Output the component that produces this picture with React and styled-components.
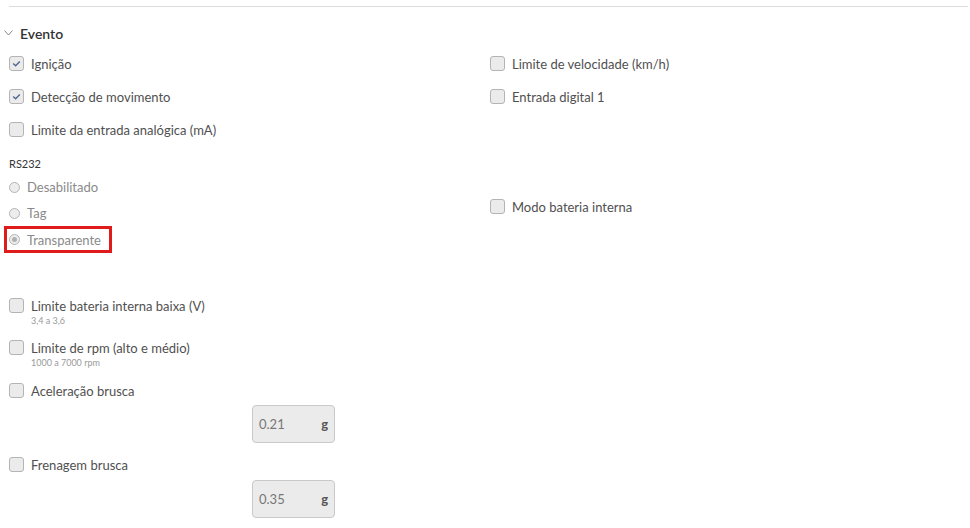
import React from "react";
import styled, { createGlobalStyle } from "styled-components";

const GlobalStyle = createGlobalStyle`
  body {
    margin: 0;
    background: #fff;
    font-family: Lato, "Liberation Sans", sans-serif;
    color: #4a4a4a;
  }
`;

const Page = styled.div`
  width: 970px;
  height: 528px;
  overflow: hidden;
  padding: 6px 2px 0 4px;
  box-sizing: border-box;
`;

const Section = styled.section`
  border-top: 1px solid #dcdcdc;
  margin-left: 5px;
`;

const Header = styled.div`
  display: flex;
  align-items: center;
  gap: 7px;
  height: 28px;
  margin: 12px 0 0 -5px;
  font-size: 14px;
  font-weight: 600;
  color: #333;
`;

const Chevron = () => (
  <svg width="9" height="6" viewBox="0 0 9 6">
    <polyline points="0.5,0.5 4.5,5 8.5,0.5" fill="none" stroke="#8a8a8a" strokeWidth="1" />
  </svg>
);

const Grid = styled.div`
  display: grid;
  grid-template-columns: 481px 1fr;
  align-items: center;
`;

const Cell = styled.div`
  height: ${(p) => p.$h || 33}px;
  display: flex;
  align-items: center;
`;

const Item = styled.label`
  display: flex;
  align-items: flex-start;
  gap: 7px;
  font-size: 13px;
  line-height: 18px;
  color: #505050;
  margin-top: ${(p) => p.$mt || 0}px;
`;

const Box = styled.span`
  flex: none;
  width: 15px;
  height: 15px;
  margin-top: 1px;
  box-sizing: border-box;
  border: 1px solid #b4b4b4;
  border-radius: 3px;
  background: #ebebeb;
  display: flex;
  align-items: center;
  justify-content: center;
`;

const Texts = styled.span`
  display: flex;
  flex-direction: column;
`;

const Hint = styled.span`
  font-size: 9px;
  line-height: 12px;
  color: #9a9a9a;
`;

const Check = ({ checked, label, hint, mt }) => (
  <Item $mt={mt}>
    <Box>
      {checked && (
        <svg width="9" height="7" viewBox="0 0 9 7">
          <polyline points="1.2,3.6 3.6,5.8 7.8,1.4" fill="none" stroke="#4f6890" strokeWidth="1.4" />
        </svg>
      )}
    </Box>
    <Texts>
      {label}
      {hint && <Hint>{hint}</Hint>}
    </Texts>
  </Item>
);

const Group = styled.div`
  display: flex;
  flex-direction: column;
  padding: 11px 0 16px;
`;

const GroupTitle = styled.div`
  font-size: 11px;
  line-height: 14px;
  color: #333;
  margin-bottom: 3px;
`;

const RadioRow = styled.div`
  display: inline-flex;
  align-self: flex-start;
  align-items: center;
  gap: 7px;
  height: 26px;
  font-size: 13px;
  color: #8a8a8a;
`;

const Highlighted = styled(RadioRow)`
  height: 21px;
  margin: 3px 0 2px -2px;
  padding: 0 8px 0 2px;
  outline: 3px solid #e01b1b;
`;

const Circle = styled.span`
  flex: none;
  width: 11px;
  height: 11px;
  box-sizing: border-box;
  border: 1px solid #b4b4b4;
  border-radius: 50%;
  background: #ededed;
  display: flex;
  align-items: center;
  justify-content: center;

  &::after {
    content: "";
    width: 5px;
    height: 5px;
    border-radius: 50%;
    background: ${(p) => (p.$on ? "#b0b0b0" : "transparent")};
  }
`;

const Column = styled.div`
  display: flex;
  flex-direction: column;
`;

const Field = styled.div`
  width: 83px;
  height: 38px;
  box-sizing: border-box;
  margin: ${(p) => p.$mt}px 0 0 243px;
  border: 1px solid #c9c9c9;
  border-radius: 4px;
  background: #ebebeb;
  display: flex;
  align-items: center;
  justify-content: space-between;
  padding: 0 6px 0 6px;
  font-size: 13px;
  color: #777;
`;

const Unit = styled.span`
  font-weight: 700;
  color: #555;
`;

export default function App() {
  return (
    <Page>
      <GlobalStyle />
      <Section>
        <Header>
          <Chevron />
          Evento
        </Header>
        <Grid>
          <Cell><Check checked label="Ignição" /></Cell>
          <Cell><Check label="Limite de velocidade (km/h)" /></Cell>
          <Cell><Check checked label="Detecção de movimento" /></Cell>
          <Cell><Check label="Entrada digital 1" /></Cell>
          <Cell><Check label="Limite da entrada analógica (mA)" /></Cell>
          <Cell />
          <Group>
            <GroupTitle>RS232</GroupTitle>
            <RadioRow><Circle />Desabilitado</RadioRow>
            <RadioRow><Circle />Tag</RadioRow>
            <Highlighted><Circle $on />Transparente</Highlighted>
          </Group>
          <Cell><Check label="Modo bateria interna" /></Cell>
        </Grid>
        <Column>
          <Check mt={29} label="Limite bateria interna baixa (V)" hint="3,4 a 3,6" />
          <Check mt={12} label="Limite de rpm (alto e médio)" hint="1000 a 7000 rpm" />
          <Check mt={13} label="Aceleração brusca" />
          <Field $mt={5}>0.21<Unit>g</Unit></Field>
          <Check mt={13} label="Frenagem brusca" />
          <Field $mt={6}>0.35<Unit>g</Unit></Field>
        </Column>
      </Section>
    </Page>
  );
}
